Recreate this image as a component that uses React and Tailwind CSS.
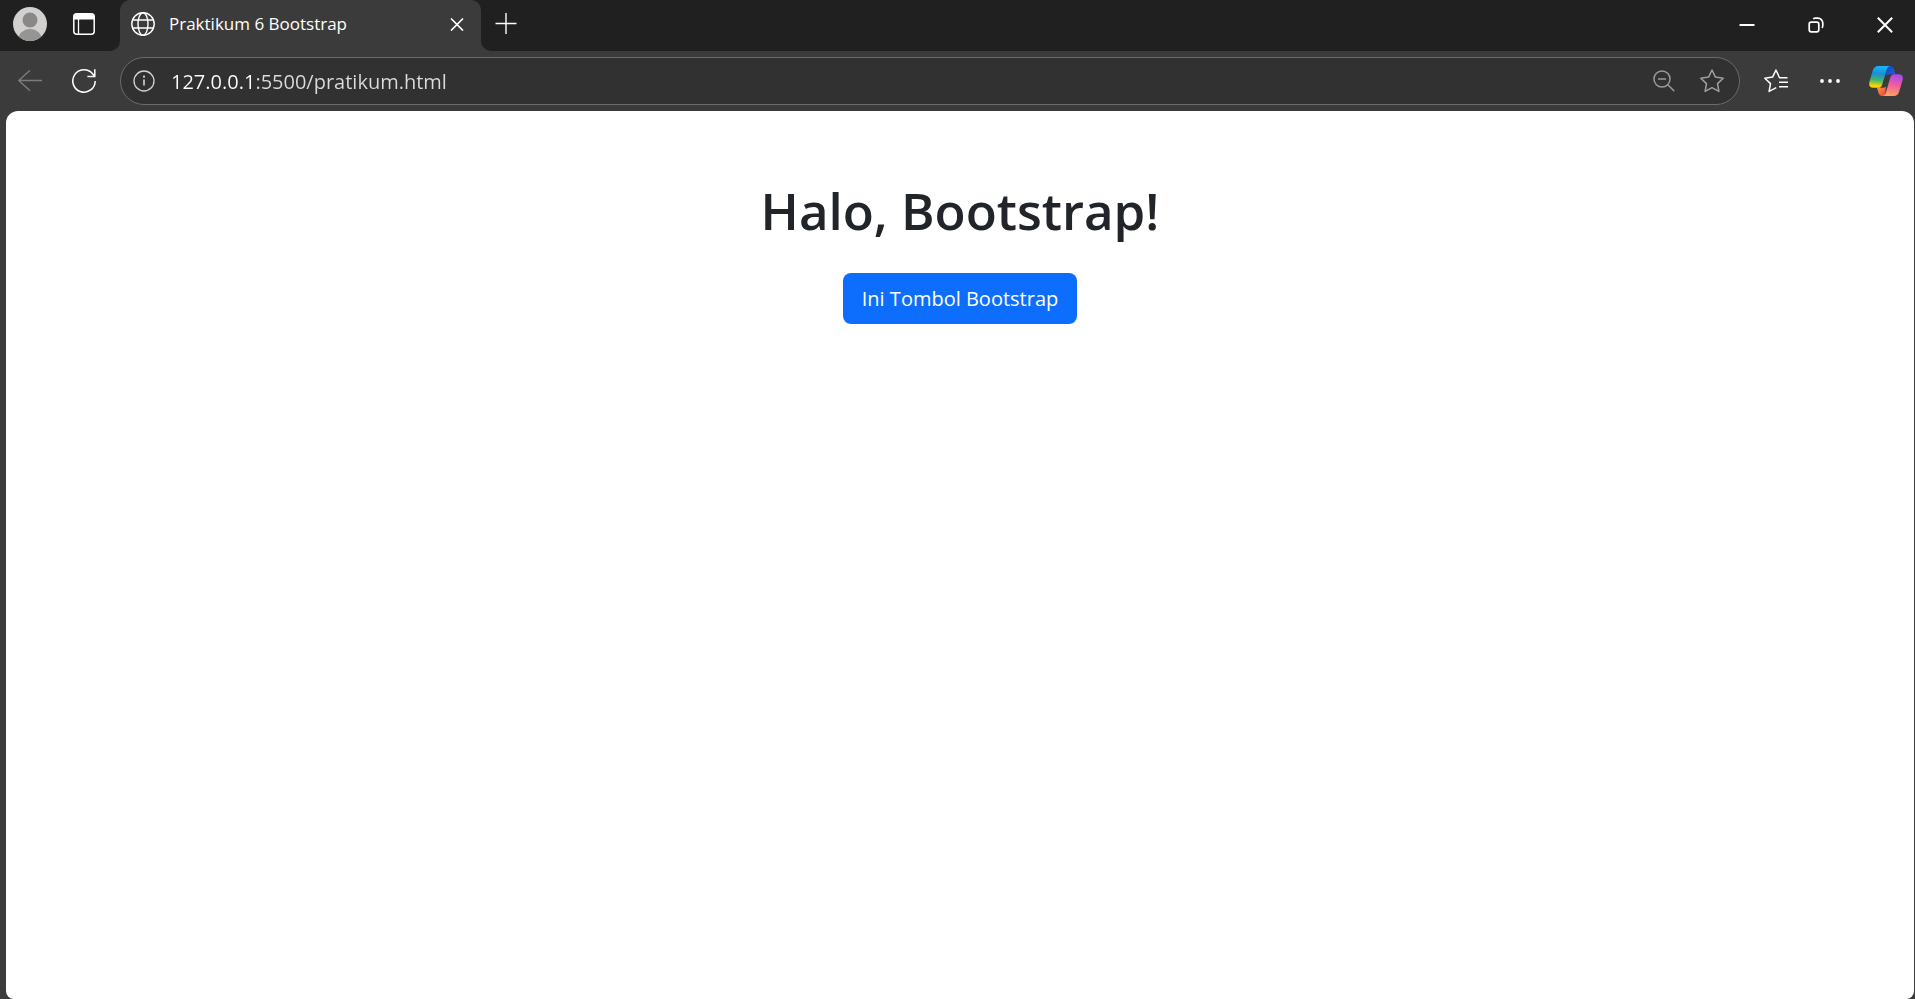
const iconButton = "flex shrink-0 items-center justify-center";

function TitleBar() {
  return (
    <div className="flex h-[51px] bg-[#3b3b3b]">
      <div className="flex w-[120px] shrink-0 items-center rounded-br-[10px] bg-[#202020] pb-[3px]">
        <button type="button" aria-label="Profile" className={`${iconButton} w-[60px]`}>
          <svg width="34" height="34" viewBox="0 0 34 34">
            <defs>
              <clipPath id="avatar">
                <circle cx="17" cy="17" r="17" />
              </clipPath>
            </defs>
            <g clipPath="url(#avatar)">
              <rect width="34" height="34" fill="#d2d0ce" />
              <circle cx="17" cy="13" r="7.5" fill="#8a8886" />
              <ellipse cx="17" cy="33.5" rx="12" ry="11.5" fill="#979593" />
            </g>
          </svg>
        </button>
        <button type="button" aria-label="Tab actions" className={`${iconButton} w-12`}>
          <svg width="22" height="22" viewBox="0 0 22 22" fill="none">
            <rect x="0.8" y="0.8" width="20.4" height="20.4" rx="3" stroke="#fff" strokeWidth="1.5" />
            <path d="M0.5 6.5V3.5a3 3 0 0 1 3-3h15a3 3 0 0 1 3 3v3z" fill="#fff" />
            <path d="M5.5 6v15" stroke="#fff" strokeWidth="1.3" />
          </svg>
        </button>
      </div>
      <div className="w-[361px] shrink-0 bg-[#202020]">
        <div className="flex h-full items-center rounded-t-[10px] bg-[#3b3b3b] pr-3 pb-[3px] pl-[11px]">
          <svg className="shrink-0" width="24" height="24" viewBox="0 0 24 24" fill="none" stroke="#fff" strokeWidth="1.4">
            <circle cx="12" cy="12" r="11.2" />
            <ellipse cx="12" cy="12" rx="5" ry="11.2" />
            <path d="M1.8 8h20.4M1.8 16h20.4" />
          </svg>
          <span className="ml-[14px] flex-1 truncate text-[17px] leading-6 text-white">Praktikum 6 Bootstrap</span>
          <button type="button" aria-label="Close tab" className={`${iconButton} size-6`}>
            <svg width="14" height="14" viewBox="0 0 14 14" fill="none" stroke="#fff" strokeWidth="1.7">
              <path d="M1 1.5l12 12M13 1.5l-12 12" />
            </svg>
          </button>
        </div>
      </div>
      <div className="flex flex-1 items-center justify-between rounded-bl-[10px] bg-[#202020]">
        <button type="button" aria-label="New tab" className={`${iconButton} w-[50px] pb-[4px]`}>
          <svg width="22" height="22" viewBox="0 0 22 22" fill="none" stroke="#fff" strokeWidth="1.4">
            <path d="M0.5 10.500h21M11 0v21" />
          </svg>
        </button>
        <div className="flex gap-[9px] pb-[1px]">
          <button type="button" aria-label="Minimize" className={`${iconButton} w-[60px]`}>
            <svg width="16" height="16" viewBox="0 0 16 16">
              <path d="M0.5 7h15v2h-15z" fill="#fff" />
            </svg>
          </button>
          <button type="button" aria-label="Restore" className={`${iconButton} w-[60px]`}>
            <svg width="16" height="16" viewBox="0 0 16 16" fill="none" stroke="#fff" strokeWidth="1.7">
              <rect x="1.2" y="5.2" width="9.6" height="9.6" rx="2" />
              <path d="M5.2 1.8C5.8 1.3 6.4 1.2 7.4 1.2H9.8a5 5 0 0 1 5 5V8.6c0 1-.3 1.7-.9 2.2" />
            </svg>
          </button>
          <button type="button" aria-label="Close" className={`${iconButton} w-[60px]`}>
            <svg width="16" height="16" viewBox="0 0 16 16" fill="none" stroke="#fff" strokeWidth="2">
              <path d="M0.8 0.8l14.4 14.4M15.2 0.8L0.8 15.2" />
            </svg>
          </button>
        </div>
      </div>
    </div>
  );
}

function CopilotIcon() {
  return (
    <svg width="34" height="30" viewBox="0 0 34 30">
      <defs>
        <linearGradient id="cpLeft" x1="0.5" y1="0" x2="0.4" y2="1">
          <stop offset="0" stopColor="#1cb4f4" />
          <stop offset="0.35" stopColor="#1690dc" />
          <stop offset="0.65" stopColor="#45b36b" />
          <stop offset="0.92" stopColor="#f9d404" />
        </linearGradient>
        <linearGradient id="cpRight" x1="0.6" y1="0" x2="0.4" y2="1">
          <stop offset="0" stopColor="#a44af0" />
          <stop offset="0.45" stopColor="#ee5aa2" />
          <stop offset="1" stopColor="#ffa45e" />
        </linearGradient>
        <linearGradient id="cpTop" x1="0" y1="0" x2="1" y2="1">
          <stop offset="0" stopColor="#0b4fb9" />
          <stop offset="1" stopColor="#2458ec" />
        </linearGradient>
        <linearGradient id="cpBottom" x1="0" y1="0" x2="1" y2="1">
          <stop offset="0" stopColor="#ff9a3c" />
          <stop offset="1" stopColor="#ef4040" />
        </linearGradient>
      </defs>
      <path d="M18 0h3c2.200 0 3.200 1.200 3.800 3l1.700 5.200h-4.500c-2 0-3.600 0-5 1.200z" fill="url(#cpTop)" />
      <path d="M16 30h-2.600c-2.200 0-3.200-1.200-3.800-3L8 21.800h4.200c2 0 3.400-.2 4.800-1.400z" fill="url(#cpBottom)" />
      <path d="M9.500 0H21.500c-2 0-3 1.400-3.700 3.600L13.200 18.400c-.8 2.400-2 3.400-4.200 3.400H4.200C.8 21.800-.4 19.500.4 16L3.800 4.500C4.700 1.500 6.500 0 9.500 0z" fill="url(#cpLeft)" />
      <path d="M24.500 30H13.200c2 0 3-1.400 3.700-3.600l4.400-14.800c.8-2.400 2-3.400 4.200-3.400h4.300c3.400 0 4.600 2.300 3.800 5.800l-3.400 11.500C29.300 28.500 27.500 30 24.500 30z" fill="url(#cpRight)" />
    </svg>
  );
}

function Toolbar() {
  return (
    <div className="flex h-[60px] items-center bg-[#3b3b3b]">
      <button type="button" aria-label="Back" disabled className={`${iconButton} w-[60px]`}>
        <svg width="24" height="22" viewBox="0 0 24 22" fill="none" stroke="#7c7c7c" strokeWidth="1.4">
          <path d="M24 10.500H0.8M12 0.300L0.8 10.500L12 20.700" />
        </svg>
      </button>
      <button type="button" aria-label="Refresh" className={`${iconButton} w-12`}>
        <svg width="24" height="24" viewBox="0 0 24 24" fill="none" stroke="#fff" strokeWidth="1.5">
          <path d="M23.200 12A11.200 11.200 0 1 1 20.500 4.700L23 7.500M22.800 0.300V7.600H15.400" />
        </svg>
      </button>
      <div className="ml-3 flex h-12 flex-1 items-center rounded-full border border-[#6b6b6b] bg-[#313131] pr-[3px]">
        <button type="button" aria-label="Site information" className={`${iconButton} w-[46px]`}>
          <svg width="22" height="22" viewBox="0 0 22 22" fill="none">
            <circle cx="11" cy="11" r="10" stroke="#d4d4d4" strokeWidth="1.3" />
            <path d="M11 9.500v6" stroke="#d4d4d4" strokeWidth="1.600" />
            <circle cx="11" cy="6.700" r="1.100" fill="#d4d4d4" />
          </svg>
        </button>
        <input
          type="text"
          aria-label="Address"
          defaultValue="127.0.0.1:5500/pratikum.html"
          className="ml-1 min-w-0 flex-1 bg-[linear-gradient(90deg,#ffffff_84px,#dcdcdc_84px)] bg-clip-text pt-[2px] text-[20px] leading-7 text-transparent caret-white outline-none"
        />
        <button type="button" aria-label="Zoom out" className={`${iconButton} w-12`}>
          <svg width="22" height="22" viewBox="0 0 22 22" fill="none" stroke="#9a9a9a" strokeWidth="1.5">
            <circle cx="9" cy="9" r="8" />
            <path d="M14.800 14.800L21.300 21.300M5 9h8" />
          </svg>
        </button>
        <button type="button" aria-label="Add to favorites" className={`${iconButton} w-12`}>
          <svg width="24" height="24" viewBox="0 0 24 24" fill="none" stroke="#a0a0a0" strokeWidth="1.500" strokeLinejoin="round">
            <path d="M12 1L15.400 8.100L23.200 9.200L17.500 14.600L18.900 22.400L12 18.700L5.100 22.400L6.500 14.600L0.800 9.200L8.600 8.100Z" />
          </svg>
        </button>
      </div>
      <div className="ml-[9px] flex">
        <button type="button" aria-label="Favorites" className={`${iconButton} w-[54px]`}>
          <svg width="24" height="24" viewBox="0 0 24 24" fill="none" stroke="#fff" strokeWidth="1.500" strokeLinejoin="round">
            <path d="M23.500 8.800H15.500L12 1L8.600 8.100L0.800 9.200L6.500 14.600L5.100 22.400L12.300 18.600M15 13.200h9M15 17.800h9" />
          </svg>
        </button>
        <button type="button" aria-label="Settings and more" className={`${iconButton} w-[54px]`}>
          <svg width="20" height="4" viewBox="0 0 20 4" fill="#fff">
            <circle cx="2" cy="2" r="1.900" />
            <circle cx="10" cy="2" r="1.900" />
            <circle cx="18" cy="2" r="1.900" />
          </svg>
        </button>
        <button type="button" aria-label="Copilot" className={`${iconButton} w-[58px]`}>
          <CopilotIcon />
        </button>
      </div>
    </div>
  );
}

export default function App() {
  return (
    <div className="flex min-h-screen flex-col bg-[#3b3b3b] font-['Open_Sans','Noto_Sans',sans-serif]">
      <header>
        <TitleBar />
        <Toolbar />
      </header>
      <main className="mr-[1px] ml-[6px] flex flex-1 flex-col items-center rounded-t-[12px] rounded-b-[8px] bg-white pt-[66px]">
        <h1 className="text-[51px] leading-[66px] font-semibold text-[#212529]">Halo, Bootstrap!</h1>
        <button type="button" className="mt-[30px] h-[51px] rounded-lg bg-[#0d6efd] px-[19px] text-[20px] leading-8 text-white">
          Ini Tombol Bootstrap
        </button>
      </main>
    </div>
  );
}
